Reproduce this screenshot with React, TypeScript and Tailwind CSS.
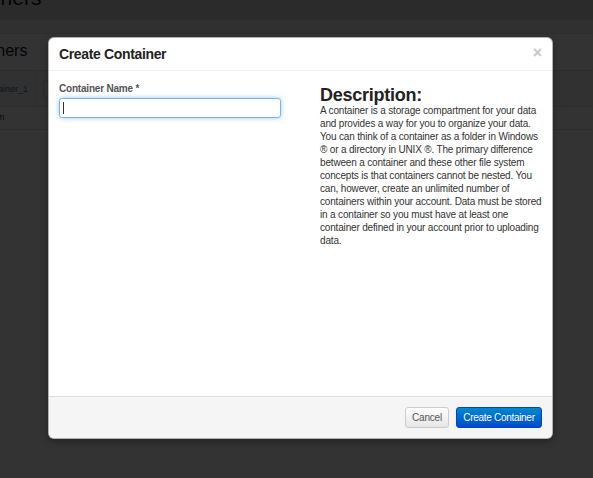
import React from 'react';

const description =
  'A container is a storage compartment for your data and provides a way for you to organize your data. You can think of a container as a folder in Windows ® or a directory in UNIX ®. The primary difference between a container and these other file system concepts is that containers cannot be nested. You can, however, create an unlimited number of containers within your account. Data must be stored in a container so you must have at least one container defined in your account prior to uploading data.';

export default function App() {
  return (
    <div className="relative w-[593px] h-[478px] overflow-hidden bg-white font-['Liberation_Sans',Arial,sans-serif]">
      {/* page behind the modal */}
      <div className="w-full">
        <div className="h-[20px] bg-[#d8d8d8] overflow-hidden">
          <div className="-ml-[94px] -mt-[20px] text-[21px] leading-[36px] text-[#111] whitespace-nowrap">My Containers</div>
        </div>
        <div className="h-[14px] bg-[#efefef] border-b border-[#e2e2e2]" />
        <div className="h-[36px] flex items-end pb-[10px] overflow-hidden">
          <span className="-ml-[50px] text-[16px] leading-[18px] text-[#111] whitespace-nowrap">Containers</span>
        </div>
        <div className="h-[37px] bg-[#f2f2f2] border-t border-b border-[#e0e0e0] flex items-center">
          <div className="w-[36px] h-full border-r border-[#e0e0e0] overflow-hidden flex items-center justify-end">
            <span className="text-[9px] text-[#3b7398] whitespace-nowrap pr-[7px] pt-[2px]">container_1</span>
          </div>
          <div className="ml-[7px] w-[80px] h-[18px] border border-[#d4d4d4] rounded-[3px] bg-[#f7f7f7]" />
        </div>
        <div className="h-[23px] border-b border-[#e0e0e0] flex items-center overflow-hidden">
          <span className="-ml-[24px] text-[9px] text-[#333] whitespace-nowrap">system</span>
        </div>
      </div>

      {/* backdrop */}
      <div className="absolute inset-0 bg-black/80" />

      {/* modal */}
      <div className="absolute left-[48px] top-[37px] w-[505px] h-[402px] bg-white rounded-[6px] border border-black/30 shadow-[0_3px_7px_rgba(0,0,0,0.3)] flex flex-col overflow-hidden">
        <div className="h-[33px] border-b border-[#eee] flex items-center justify-between pl-[10px] pr-[10px] shrink-0">
          <h3 className="text-[14px] tracking-[-0.35px] font-bold text-[#222] leading-none">Create Container</h3>
          <span className="text-[16px] font-bold text-[#c8c8c8] leading-none -mt-[2px]">×</span>
        </div>

        <div className="flex-1 flex pl-[10px] pr-[10px] pt-[11px]">
          <div className="w-[261px] shrink-0">
            <label className="block text-[10px] tracking-[-0.2px] font-bold text-[#555] leading-[14px]">Container Name *</label>
            <div className="mt-[2px] w-[222px] h-[20px] bg-white border border-[#7fb3e8] rounded-[3px] shadow-[0_0_5px_rgba(82,168,236,0.6)] flex items-center pl-[3px]">
              <span className="w-px h-[12px] bg-[#333]" />
            </div>
          </div>
          <div className="w-[224px] pt-[4px]">
            <h4 className="text-[18px] tracking-[-0.25px] font-bold text-[#222] leading-[18px]">Description:</h4>
            <p className="text-[10px] tracking-[-0.17px] leading-[13px] text-[#333]">{description}</p>
          </div>
        </div>

        <div className="h-[42px] shrink-0 bg-[#f5f5f5] border-t border-[#ddd] flex items-center justify-end gap-[7px] pr-[10px]">
          <button className="w-[44px] h-[21px] text-[10px] tracking-[-0.2px] text-[#555] rounded-[3px] border border-[#ccc] bg-gradient-to-b from-white to-[#e6e6e6] flex items-center justify-center">
            Cancel
          </button>
          <button className="w-[86px] h-[21px] text-[10px] tracking-[-0.3px] text-white rounded-[3px] border border-[#0044cc] bg-gradient-to-b from-[#0088cc] to-[#0048cc] flex items-center justify-center">
            Create Container
          </button>
        </div>
      </div>
    </div>
  );
}
